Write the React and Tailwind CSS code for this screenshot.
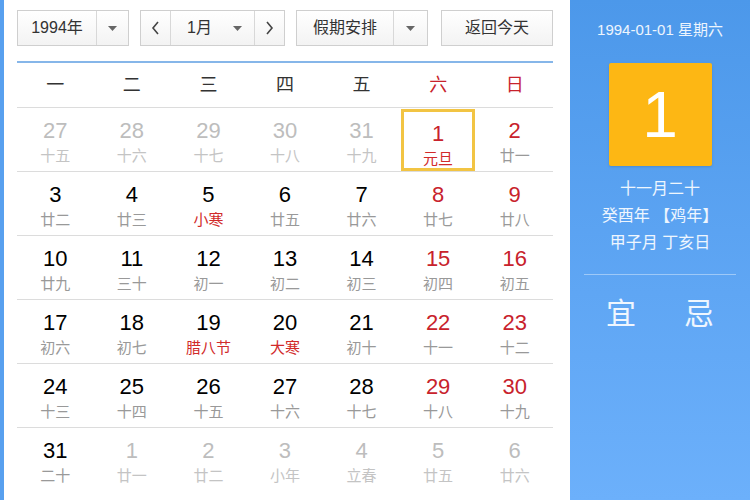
import React from 'react';

const weeks = [
  [['27', '十五', 'o'], ['28', '十六', 'o'], ['29', '十七', 'o'], ['30', '十八', 'o'], ['31', '十九', 'o'], ['1', '元旦', 'w', 'r'], ['2', '廿一', 'w']],
  [['3', '廿二'], ['4', '廿三'], ['5', '小寒', '', 'r'], ['6', '廿五'], ['7', '廿六'], ['8', '廿七', 'w'], ['9', '廿八', 'w']],
  [['10', '廿九'], ['11', '三十'], ['12', '初一'], ['13', '初二'], ['14', '初三'], ['15', '初四', 'w'], ['16', '初五', 'w']],
  [['17', '初六'], ['18', '初七'], ['19', '腊八节', '', 'r'], ['20', '大寒', '', 'r'], ['21', '初十'], ['22', '十一', 'w'], ['23', '十二', 'w']],
  [['24', '十三'], ['25', '十四'], ['26', '十五'], ['27', '十六'], ['28', '十七'], ['29', '十八', 'w'], ['30', '十九', 'w']],
  [['31', '二十'], ['1', '廿一', 'o'], ['2', '廿二', 'o'], ['3', '小年', 'o'], ['4', '立春', 'o'], ['5', '廿五', 'o'], ['6', '廿六', 'o']],
];

const Caret = () => (
  <svg width="9" height="5" viewBox="0 0 9 5" className="text-[#666]">
    <path d="M0 0h9L4.5 5z" fill="currentColor" />
  </svg>
);

const Chevron = ({ dir }) => (
  <svg width="9" height="14" viewBox="0 0 9 14" fill="none" stroke="#444" strokeWidth="1.6">
    {dir === 'left' ? <path d="M7 1L2 7l5 6" /> : <path d="M2 1l5 6-5 6" />}
  </svg>
);

const btn = 'h-[36px] border border-[#cfcfcf] bg-gradient-to-b from-white to-[#f3f3f3] flex items-center';

const DayCell = ({ day }) => {
  const [num, lunar, kind = '', mark = ''] = day;
  const other = kind === 'o';
  const today = num === '1' && lunar === '元旦';
  const numColor = other ? 'text-[#bdbdbd]' : kind === 'w' ? 'text-[#c8222c]' : 'text-black';
  const lunarColor = other ? 'text-[#c4c4c4]' : mark === 'r' ? 'text-[#d12a2a]' : 'text-[#999]';
  return (
    <div className="flex items-center justify-center">
      <div
        className={`w-[74px] h-[62px] flex flex-col items-center pt-[9px] ${
          today ? 'border-[3px] border-[#f2c443] pt-[6px]' : ''
        }`}
      >
        <span className={`text-[22px] leading-[26px] ${numColor}`}>{num}</span>
        <span className={`text-[15px] leading-[20px] mt-[2px] ${lunarColor}`}>{lunar}</span>
      </div>
    </div>
  );
};

export default function App() {
  return (
    <div
      className="w-[750px] h-[500px] flex bg-white overflow-hidden"
      style={{ fontFamily: '"Liberation Sans", "Noto Sans CJK SC", sans-serif' }}
    >
      <div className="w-[4px] bg-[#58a0ef]" />
      <div className="flex-1 pl-[13px] pr-[17px] pt-[10px]">
        <div className="flex items-center text-[16px] text-[#333]">
          <div className={`${btn} w-[112px]`}>
            <span className="w-[79px] text-center border-r border-[#d8d8d8] leading-[34px]">1994年</span>
            <span className="flex-1 flex justify-center"><Caret /></span>
          </div>
          <div className={`${btn} w-[145px] ml-[11px]`}>
            <span className="w-[30px] h-full flex items-center justify-center border-r border-[#d8d8d8]"><Chevron dir="left" /></span>
            <span className="flex-1 flex items-center justify-between pl-[16px] pr-[12px]">
              <span>1月</span>
              <Caret />
            </span>
            <span className="w-[30px] h-full flex items-center justify-center border-l border-[#d8d8d8]"><Chevron dir="right" /></span>
          </div>
          <div className={`${btn} w-[132px] ml-[11px]`}>
            <span className="w-[97px] text-center border-r border-[#d8d8d8] leading-[34px]">假期安排</span>
            <span className="flex-1 flex justify-center"><Caret /></span>
          </div>
          <div className={`${btn} w-[112px] ml-[13px] justify-center`}>返回今天</div>
        </div>

        <div className="mt-[15px] h-[2px] bg-[#86b6e9]" />
        <div className="grid grid-cols-7 h-[45px] border-b border-[#dcdcdc] text-[18px]">
          {['一', '二', '三', '四', '五', '六', '日'].map((d, i) => (
            <div key={d} className={`flex items-center justify-center ${i > 4 ? 'text-[#c8222c]' : 'text-[#333]'}`}>
              {d}
            </div>
          ))}
        </div>

        {weeks.map((w, r) => (
          <div key={r} className={`grid grid-cols-7 h-[64px] ${r < 5 ? 'border-b border-[#dcdcdc]' : ''}`}>
            {w.map((d, i) => (
              <DayCell key={i} day={d} />
            ))}
          </div>
        ))}
      </div>

      <div className="w-[180px] bg-gradient-to-b from-[#4c98ea] to-[#6cb0fb] flex flex-col items-center text-white/90">
        <div className="mt-[19px] text-[15px] leading-[22px]">1994-01-01 星期六</div>
        <div className="mt-[22px] w-[103px] h-[103px] bg-[#fdb714] rounded-[2px] flex items-center justify-center text-white text-[64px] leading-none shadow-sm">
          1
        </div>
        <div className="mt-[9px] text-[16px] leading-[27px] text-center">
          <div>十一月二十</div>
          <div>癸酉年 【鸡年】</div>
          <div>甲子月 丁亥日</div>
        </div>
        <div className="mt-[18px] w-[152px] h-[1px] bg-white/40" />
        <div className="mt-[19px] flex gap-[48px] text-[30px] leading-[40px]">
          <span>宜</span>
          <span>忌</span>
        </div>
      </div>
    </div>
  );
}
